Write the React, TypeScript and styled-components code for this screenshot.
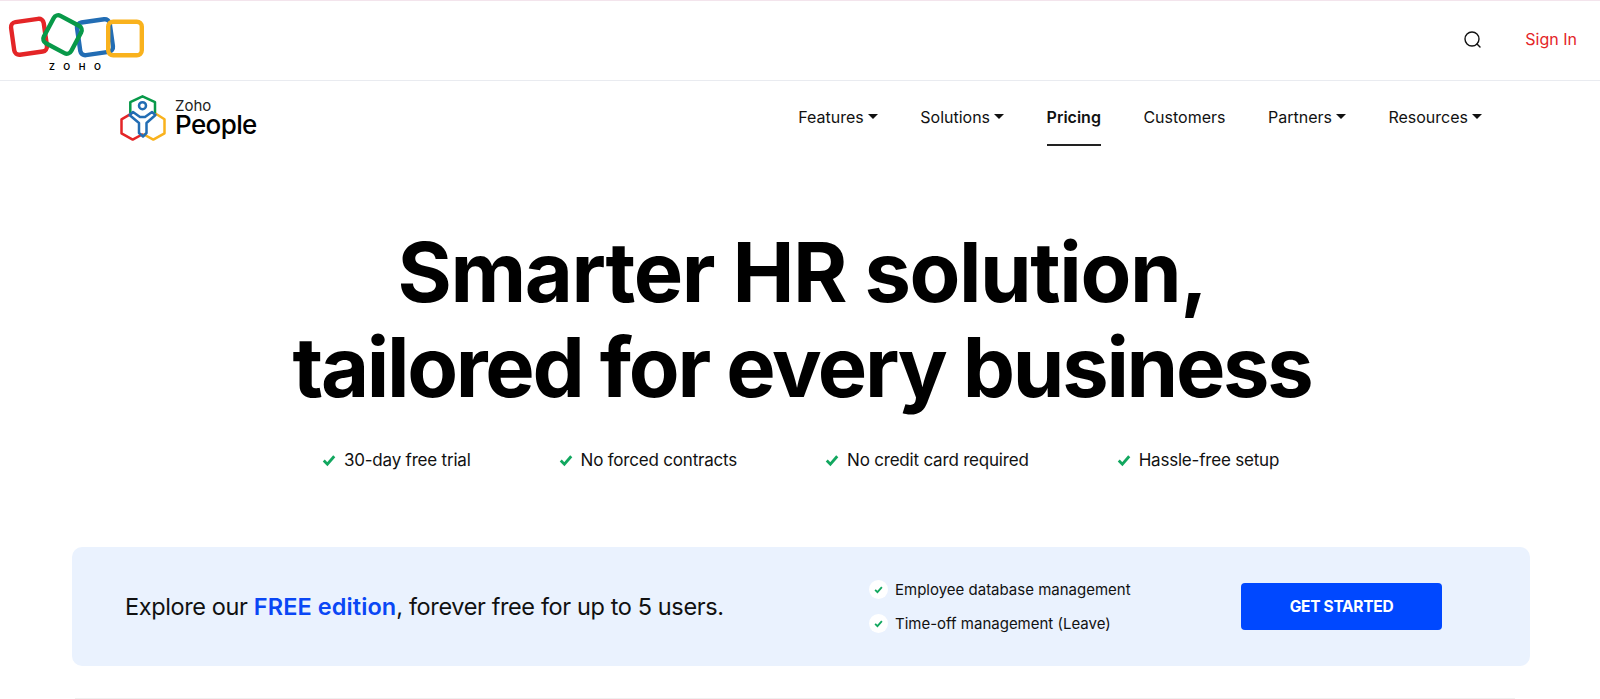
import styled, { createGlobalStyle } from "styled-components";

const GlobalStyle = createGlobalStyle`
  html, body {
    margin: 0;
    background: #fff;
    overflow: hidden;
  }
  body {
    font-family: Inter, "Liberation Sans", sans-serif;
    color: #000;
  }
`;

const Page = styled.div`
  width: 1600px;
  height: 699px;
  overflow: hidden;
  border-top: 1px solid #f3e4ec;
  box-sizing: border-box;
`;

const TopBar = styled.header`
  height: 80px;
  box-sizing: border-box;
  border-bottom: 1px solid #e9ebf0;
  display: flex;
  align-items: center;
  justify-content: space-between;
  padding: 0 23px 2px 8px;
`;

const TopActions = styled.div`
  display: flex;
  align-items: center;
  gap: 43px;
`;

const SignIn = styled.a`
  font-size: 16px;
  color: #e42527;
  margin-bottom: 2px;
`;

const NavRow = styled.div`
  height: 65px;
  display: flex;
  align-items: center;
  justify-content: space-between;
  padding: 0 118px 0 120px;
`;

const Brand = styled.div`
  display: flex;
  align-items: center;
  gap: 9px;
  margin-top: 8px;
`;

const BrandText = styled.div`
  display: flex;
  flex-direction: column;
  margin-bottom: 1px;
`;

const BrandSmall = styled.span`
  font-size: 15px;
  line-height: 15px;
  font-weight: 400;
  color: #222;
`;

const BrandBig = styled.span`
  font-size: 26px;
  line-height: 24px;
  font-weight: 500;
  letter-spacing: -0.6px;
`;

const Nav = styled.nav`
  display: flex;
  align-items: stretch;
  align-self: stretch;
  gap: 42.5px;
`;

const NavItem = styled.a<{ $active?: boolean }>`
  display: flex;
  align-items: center;
  gap: 4px;
  font-size: 16px;
  font-weight: ${(p) => (p.$active ? 600 : 400)};
  color: #111;
  border-bottom: 2px solid ${(p) => (p.$active ? "#222" : "transparent")};
  box-sizing: border-box;
  padding-top: 8px;
`;

const Caret = styled.span`
  width: 0;
  height: 0;
  border-left: 5px solid transparent;
  border-right: 5px solid transparent;
  border-top: 5px solid #111;
`;

const Hero = styled.section`
  display: flex;
  flex-direction: column;
  align-items: center;
  padding: 79px 0 0 4px;
`;

const Title = styled.h1`
  margin: 0;
  font-size: 83px;
  line-height: 95px;
  font-weight: 700;
  text-align: center;
  color: #000;
`;

const TitleLine = styled.span<{ $tracking: number }>`
  display: block;
  letter-spacing: ${(p) => p.$tracking}px;
`;

const Perks = styled.ul`
  list-style: none;
  display: flex;
  gap: 88px;
  margin: 35px 3px 0 0;
  padding: 0;
`;

const Perk = styled.li`
  display: flex;
  align-items: center;
  gap: 8px;
  font-size: 17px;
  letter-spacing: -0.2px;
  color: #111;
`;

const Banner = styled.section`
  margin: 77px 70px 0 72px;
  height: 119px;
  background: #eaf2fe;
  border-radius: 10px;
  display: flex;
  align-items: center;
  padding: 0 88px 0 53px;
`;

const Lead = styled.p`
  margin: 0;
  width: 744px;
  font-size: 23.5px;
  letter-spacing: -0.38px;
  color: #111;
`;

const Strong = styled.strong`
  color: #0a47f5;
  font-weight: 600;
  letter-spacing: 0.1px;
`;

const Features = styled.ul`
  list-style: none;
  flex: 1;
  margin: 0;
  padding: 0;
  display: flex;
  flex-direction: column;
  gap: 15px;
`;

const Feature = styled.li`
  display: flex;
  align-items: center;
  gap: 7px;
  font-size: 15px;
  color: #111;
`;

const CheckDot = styled.span`
  width: 19px;
  height: 19px;
  border-radius: 50%;
  background: #fff;
  display: flex;
  align-items: center;
  justify-content: center;
`;

const CtaButton = styled.button`
  width: 201px;
  height: 47px;
  border: 0;
  border-radius: 4px;
  background: #0048ff;
  color: #fff;
  font-family: inherit;
  font-size: 15.5px;
  font-weight: 700;
  letter-spacing: -0.3px;
`;

const Divider = styled.hr`
  margin: 32px 85px 0 75px;
  border: 0;
  border-top: 1px solid #f0f0f0;
`;

const Check = ({ size }: { size: number }) => (
  <svg width={size} height={size} viewBox="0 0 12 12">
    <path d="M1.5 6.5 4.6 9.6 10.5 2.8" fill="none" stroke="#12a75f" strokeWidth="2.4" />
  </svg>
);

const SearchIcon = () => (
  <svg width="19" height="19" viewBox="0 0 19 19" fill="none" stroke="#111" strokeWidth="1.4">
    <circle cx="9" cy="9" r="7" />
    <path d="M14 14l3 3" strokeLinecap="round" />
  </svg>
);

const ZohoLogo = () => (
  <svg width="140" height="72" viewBox="0 0 140 72">
    <g fill="none" strokeWidth="4.4">
      <rect x="4.5" y="16.300" width="33" height="33" rx="5" stroke="#e42527" transform="rotate(-8 21 32.800)" />
      <rect x="70.500" y="16.700" width="33" height="33" rx="5" stroke="#226db4" transform="rotate(-8 87 33.200)" />
      <rect x="39" y="15" width="31" height="31" rx="5" stroke="#089949" transform="rotate(28 54.500 30.500)" />
      <rect x="100.200" y="17.700" width="33.600" height="33.600" rx="5" stroke="#f9b21d" />
    </g>
    <text x="41" y="66" fontFamily="Inter, sans-serif" fontSize="9" fontWeight="600" letterSpacing="8.6">ZOHO</text>
  </svg>
);

const PeopleLogo = () => (
  <svg width="46" height="46" viewBox="0 0 46 46" fill="none" strokeWidth="2.5" strokeLinejoin="round">
    <path d="M11.700 18.300 1.500 24.300v14l11.200 6.300L23 39" stroke="#e42527" />
    <path d="M35 18.300l9.500 6v14l-11.200 6.300L23 39" stroke="#f9b21d" />
    <path d="M10.300 18V7.200L22.500 1.300 35 7.200V18" stroke="#089949" />
    <circle cx="22.500" cy="10.700" r="3.500" stroke="#226db4" />
    <path d="M9.500 20l3.500-3 7 5h5l7-5 3.500 3-9 8v10l-3.500 3.500L19 38V28z" stroke="#226db4" />
  </svg>
);

const perks = ["30-day free trial", "No forced contracts", "No credit card required", "Hassle-free setup"];

const navItems = [
  { label: "Features", caret: true },
  { label: "Solutions", caret: true },
  { label: "Pricing", active: true },
  { label: "Customers" },
  { label: "Partners", caret: true },
  { label: "Resources", caret: true },
];

export default function App() {
  return (
    <>
      <GlobalStyle />
      <Page>
        <TopBar>
          <ZohoLogo />
          <TopActions>
            <SearchIcon />
            <SignIn>Sign In</SignIn>
          </TopActions>
        </TopBar>
        <NavRow>
          <Brand>
            <PeopleLogo />
            <BrandText>
              <BrandSmall>Zoho</BrandSmall>
              <BrandBig>People</BrandBig>
            </BrandText>
          </Brand>
          <Nav>
            {navItems.map((item) => (
              <NavItem key={item.label} $active={item.active}>
                {item.label}
                {item.caret && <Caret />}
              </NavItem>
            ))}
          </Nav>
        </NavRow>
        <Hero>
          <Title>
            <TitleLine $tracking={-1.4}>Smarter HR solution,</TitleLine>
            <TitleLine $tracking={-2.3}>tailored for every business</TitleLine>
          </Title>
          <Perks>
            {perks.map((perk) => (
              <Perk key={perk}>
                <Check size={14} />
                {perk}
              </Perk>
            ))}
          </Perks>
        </Hero>
        <Banner>
          <Lead>
            Explore our <Strong>FREE edition</Strong>, forever free for up to 5 users.
          </Lead>
          <Features>
            <Feature>
              <CheckDot>
                <Check size={9} />
              </CheckDot>
              Employee database management
            </Feature>
            <Feature>
              <CheckDot>
                <Check size={9} />
              </CheckDot>
              Time-off management (Leave)
            </Feature>
          </Features>
          <CtaButton>GET STARTED</CtaButton>
        </Banner>
        <Divider />
      </Page>
    </>
  );
}
